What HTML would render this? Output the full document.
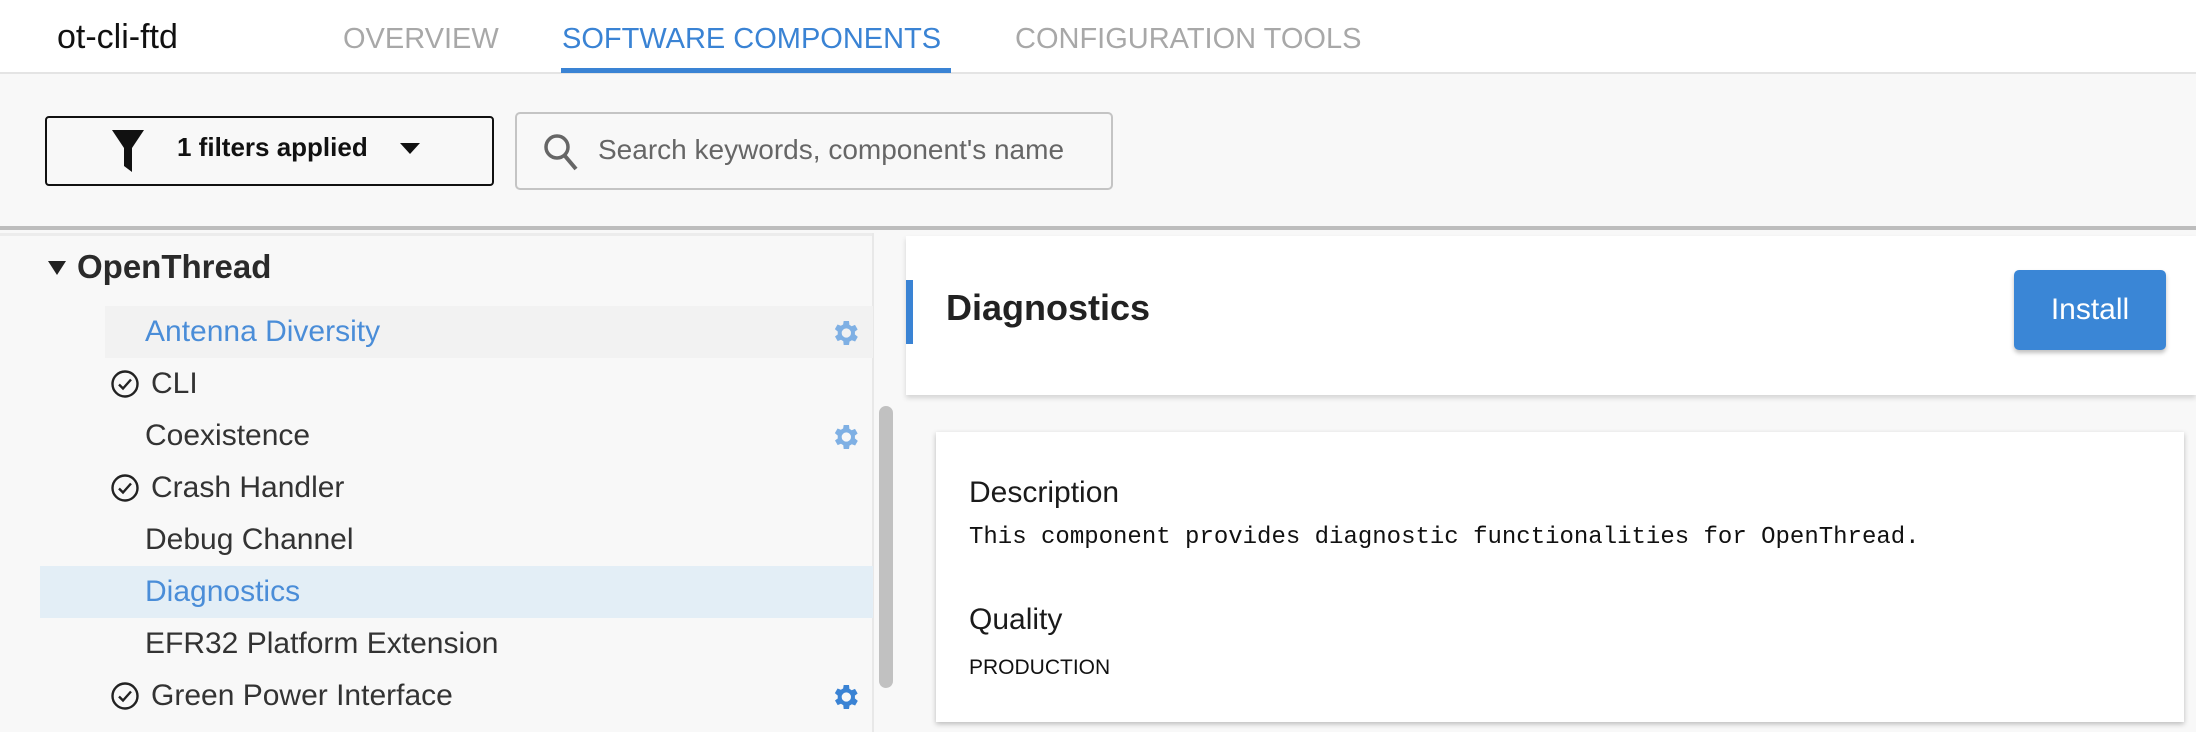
<!DOCTYPE html>
<html><head><meta charset="utf-8"><style>
*{margin:0;padding:0;box-sizing:border-box}
body{width:2196px;height:732px;overflow:hidden;background:#f8f8f8;font-family:"Liberation Sans",sans-serif;position:relative;color:#222}
.a{position:absolute}
.hdr{left:0;top:0;width:2196px;height:74px;background:#fff;border-bottom:2px solid #e4e4e4}
.tab{top:23px;font-size:29px;color:#a8a8a8;white-space:nowrap}
.row{position:absolute;left:0;width:873px;height:52px;font-size:30px;line-height:52px;color:#333}
.row span.t{position:absolute;left:145px}
.row span.c{left:151px}
.chk{position:absolute;left:110px;top:11px}
.gear{position:absolute;left:829px;top:11px}
</style></head><body>
<div class="a hdr"></div>
<div class="a" style="left:57px;top:18px;font-size:34px;color:#111">ot-cli-ftd</div>
<div class="a tab" style="left:343px">OVERVIEW</div>
<div class="a tab" style="left:562px;color:#3a83d4">SOFTWARE COMPONENTS</div>
<div class="a" style="left:561px;top:68px;width:390px;height:5px;background:#3a83d4"></div>
<div class="a tab" style="left:1015px">CONFIGURATION TOOLS</div>

<div class="a" style="left:45px;top:116px;width:449px;height:70px;border:2px solid #111;border-radius:4px;background:#f8f8f8"></div>
<svg class="a" style="left:111px;top:128px" width="34" height="46" viewBox="0 0 34 46"><path d="M1 2h32L21 20v24l-8-6V20z" fill="#111"/></svg>
<div class="a" style="left:177px;top:132px;font-size:26px;font-weight:bold;color:#111">1 filters applied</div>
<div class="a" style="left:400px;top:143px;width:0;height:0;border-left:10px solid transparent;border-right:10px solid transparent;border-top:11px solid #111"></div>

<div class="a" style="left:515px;top:112px;width:598px;height:78px;border:2px solid #c4c4c4;border-radius:5px"></div>
<svg class="a" style="left:543px;top:133px" width="36" height="40" viewBox="0 0 36 40"><circle cx="14" cy="14" r="11" fill="none" stroke="#666" stroke-width="3.5"/><path d="M22 23l11 13" stroke="#666" stroke-width="4"/></svg>
<div class="a" style="left:598px;top:134px;font-size:28px;color:#666">Search keywords, component's name</div>

<div class="a" style="left:0;top:226px;width:2196px;height:4px;background:#bdbdbd"></div>
<div class="a" style="left:0;top:233px;width:873px;height:3px;background:#ececec"></div>
<div class="a" style="left:872px;top:233px;width:2px;height:499px;background:#e8e8e8"></div>

<div class="a" style="left:48px;top:261px;width:0;height:0;border-left:9px solid transparent;border-right:9px solid transparent;border-top:14px solid #222"></div>
<div class="a" style="left:77px;top:248px;font-size:33px;font-weight:bold;color:#2a2a2a">OpenThread</div>

<div class="a" style="left:105px;top:306px;width:768px;height:52px;background:#f2f2f2"></div>
<div class="a" style="left:40px;top:566px;width:833px;height:52px;background:#e3eef6"></div>

<div class="row" style="top:306px"><span class="t" style="color:#4a8dd8">Antenna Diversity</span><svg class="gear" width="32" height="32" viewBox="0 0 24 24"><path fill="#7fb0e4" d="M19.4 13a7.5 7.5 0 000-2l2.1-1.6-2-3.5-2.5 1a7 7 0 00-1.7-1L15 3h-4l-.4 2.6a7 7 0 00-1.7 1l-2.5-1-2 3.5L6.6 11a7.5 7.5 0 000 2l-2.1 1.6 2 3.5 2.5-1a7 7 0 001.7 1L11 21h4l.4-2.6a7 7 0 001.7-1l2.5 1 2-3.5zM13 15.5A3.5 3.5 0 1113 8.5a3.5 3.5 0 010 7z"/></svg></div>
<div class="row" style="top:358px"><svg class="chk" width="30" height="30" viewBox="0 0 30 30"><circle cx="15" cy="15" r="12.5" fill="none" stroke="#222" stroke-width="2.4"/><path d="M9 15.5l4 4 8-9" fill="none" stroke="#222" stroke-width="2.4"/></svg><span class="t c">CLI</span></div>
<div class="row" style="top:410px"><span class="t">Coexistence</span><svg class="gear" width="32" height="32" viewBox="0 0 24 24"><path fill="#7fb0e4" d="M19.4 13a7.5 7.5 0 000-2l2.1-1.6-2-3.5-2.5 1a7 7 0 00-1.7-1L15 3h-4l-.4 2.6a7 7 0 00-1.7 1l-2.5-1-2 3.5L6.6 11a7.5 7.5 0 000 2l-2.1 1.6 2 3.5 2.5-1a7 7 0 001.7 1L11 21h4l.4-2.6a7 7 0 001.7-1l2.5 1 2-3.5zM13 15.5A3.5 3.5 0 1113 8.5a3.5 3.5 0 010 7z"/></svg></div>
<div class="row" style="top:462px"><svg class="chk" width="30" height="30" viewBox="0 0 30 30"><circle cx="15" cy="15" r="12.5" fill="none" stroke="#222" stroke-width="2.4"/><path d="M9 15.5l4 4 8-9" fill="none" stroke="#222" stroke-width="2.4"/></svg><span class="t c">Crash Handler</span></div>
<div class="row" style="top:514px"><span class="t">Debug Channel</span></div>
<div class="row" style="top:566px"><span class="t" style="color:#4a8dd8">Diagnostics</span></div>
<div class="row" style="top:618px"><span class="t">EFR32 Platform Extension</span></div>
<div class="row" style="top:670px"><svg class="chk" width="30" height="30" viewBox="0 0 30 30"><circle cx="15" cy="15" r="12.5" fill="none" stroke="#222" stroke-width="2.4"/><path d="M9 15.5l4 4 8-9" fill="none" stroke="#222" stroke-width="2.4"/></svg><span class="t c">Green Power Interface</span><svg class="gear" width="32" height="32" viewBox="0 0 24 24"><path fill="#3a83d4" d="M19.4 13a7.5 7.5 0 000-2l2.1-1.6-2-3.5-2.5 1a7 7 0 00-1.7-1L15 3h-4l-.4 2.6a7 7 0 00-1.7 1l-2.5-1-2 3.5L6.6 11a7.5 7.5 0 000 2l-2.1 1.6 2 3.5 2.5-1a7 7 0 001.7 1L11 21h4l.4-2.6a7 7 0 001.7-1l2.5 1 2-3.5zM13 15.5A3.5 3.5 0 1113 8.5a3.5 3.5 0 010 7z"/></svg></div>

<div class="a" style="left:879px;top:406px;width:14px;height:282px;background:#c1c1c1;border-radius:7px"></div>

<div class="a" style="left:906px;top:236px;width:1290px;height:159px;background:#fff;box-shadow:0 3px 5px rgba(0,0,0,.15)"></div>
<div class="a" style="left:906px;top:280px;width:7px;height:64px;background:#3a83d4"></div>
<div class="a" style="left:946px;top:287px;font-size:36px;font-weight:bold;color:#222">Diagnostics</div>
<div class="a" style="left:2014px;top:270px;width:152px;height:80px;background:#3a86d6;border-radius:5px;box-shadow:0 3px 4px rgba(0,0,0,.25);color:#fff;font-size:30px;text-align:center;line-height:80px">Install</div>

<div class="a" style="left:936px;top:432px;width:1248px;height:290px;background:#fff;box-shadow:0 2px 5px rgba(0,0,0,.25)"></div>
<div class="a" style="left:969px;top:476px;font-size:30px;color:#1a1a1a">Description</div>
<div class="a" style="left:969px;top:524px;font-size:24px;font-family:'Liberation Mono',monospace;color:#111">This component provides diagnostic functionalities for OpenThread.</div>
<div class="a" style="left:969px;top:603px;font-size:30px;color:#1a1a1a">Quality</div>
<div class="a" style="left:969px;top:656px;font-size:21px;color:#111">PRODUCTION</div>
</body></html>
